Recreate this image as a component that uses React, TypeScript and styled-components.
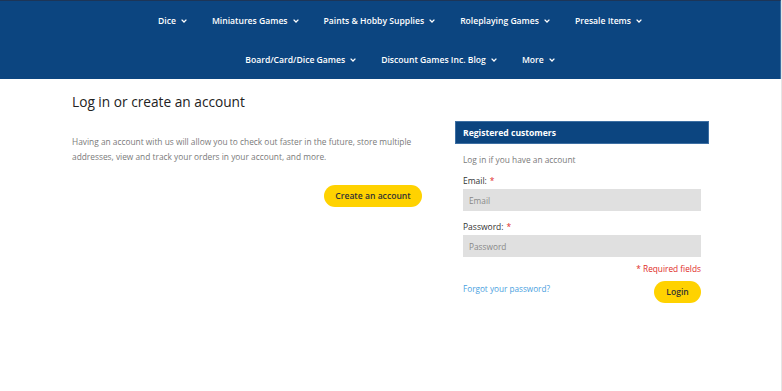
import React from "react";
import styled, { createGlobalStyle } from "styled-components";

const Global = createGlobalStyle`
  html, body { margin: 0; padding: 0; background: #fff; }
  body { font-family: "Open Sans", "Liberation Sans", sans-serif; }
  * { box-sizing: border-box; }
`;

const Page = styled.div`
  width: 782px;
  min-height: 391px;
  border-right: 1px solid #e6e6e6;
`;

const Header = styled.header`
  height: 79px;
  background: #0c4580;
  border-top: 1px solid #1d3557;
  border-right: 1px solid #3d6fa3;
  padding-left: 20px;
  display: flex;
  flex-direction: column;
`;

const NavRow = styled.ul`
  list-style: none;
  margin: 0;
  padding: 0;
  height: 39px;
  display: flex;
  justify-content: center;
  align-items: center;
  gap: 25px;
`;

const NavItem = styled.li`
  color: #fff;
  font-size: 8.6px;
  font-weight: 600;
  display: flex;
  align-items: center;
  gap: 5px;
  white-space: nowrap;
`;

const Chevron = () => (
  <svg width="6" height="4" viewBox="0 0 6 4">
    <path d="M0.6 0.6 L3 3 L5.4 0.6" fill="none" stroke="#fff" strokeWidth="1.3" />
  </svg>
);

const Main = styled.main`
  width: 637px;
  margin-left: 72px;
  padding-top: 13px;
`;

const Title = styled.h1`
  margin: 0;
  font-size: 13.7px;
  font-weight: 500;
  color: #222;
  line-height: 20px;
`;

const Columns = styled.div`
  display: flex;
  justify-content: space-between;
  align-items: flex-start;
`;

const LeftCol = styled.section`
  width: 350px;
  padding-top: 22px;
  display: flex;
  flex-direction: column;
`;

const Text = styled.p`
  margin: 0;
  font-size: 8.35px;
  line-height: 15px;
  color: #7a7a7a;
`;

const Pill = styled.button<{ $w: number }>`
  height: 22px;
  width: ${(p) => p.$w}px;
  border: none;
  border-radius: 11px;
  background: #ffd200;
  color: #333;
  font-family: "Open Sans", "Liberation Sans", sans-serif;
  font-size: 8.6px;
  font-weight: 600;
  padding: 0;
  cursor: pointer;
`;

const RightAlign = styled.div<{ $mt: number }>`
  display: flex;
  justify-content: flex-end;
  margin-top: ${(p) => p.$mt}px;
`;

const RightCol = styled.section`
  width: 254px;
  margin-top: 9px;
`;

const BlockTitle = styled.div`
  height: 23px;
  background: #0c4580;
  border: 1px solid #3d6fa3;
  color: #fff;
  font-size: 8.6px;
  font-weight: 700;
  display: flex;
  align-items: center;
  padding-left: 7px;
`;

const Form = styled.form`
  padding: 8px 8px 0;
  display: flex;
  flex-direction: column;
`;

const Label = styled.label<{ $mt: number }>`
  margin-top: ${(p) => p.$mt}px;
  font-size: 8.5px;
  color: #333;
  line-height: 14px;
  margin-bottom: 1px;
`;

const Star = styled.span`
  color: #e02b27;
  margin-left: 3px;
`;

const Input = styled.input`
  height: 22px;
  width: 100%;
  border: none;
  background: #e0e0e0;
  padding: 0 6px;
  font-family: "Open Sans", "Liberation Sans", sans-serif;
  font-size: 8.3px;
  color: #333;
  outline: none;
  &::placeholder { color: #888; }
`;

const Required = styled.div`
  margin-top: 6px;
  text-align: right;
  font-size: 8.3px;
  color: #e02b27;
  line-height: 12px;
`;

const Actions = styled.div`
  margin-top: 6px;
  display: flex;
  justify-content: space-between;
  align-items: flex-start;
`;

const Forgot = styled.a`
  margin-top: 2px;
  font-size: 8.2px;
  color: #4a9fe0;
  text-decoration: none;
  line-height: 12px;
`;

const nav1 = ["Dice", "Miniatures Games", "Paints & Hobby Supplies", "Roleplaying Games", "Presale Items"];
const nav2 = ["Board/Card/Dice Games", "Discount Games Inc. Blog", "More"];

export default function App() {
  return (
    <Page>
      <Global />
      <Header>
        <NavRow>
          {nav1.map((n) => (
            <NavItem key={n}>
              {n} <Chevron />
            </NavItem>
          ))}
        </NavRow>
        <NavRow>
          {nav2.map((n) => (
            <NavItem key={n}>
              {n} <Chevron />
            </NavItem>
          ))}
        </NavRow>
      </Header>
      <Main>
        <Title>Log in or create an account</Title>
        <Columns>
          <LeftCol>
            <Text>
              Having an account with us will allow you to check out faster in the future, store multiple
              addresses, view and track your orders in your account, and more.
            </Text>
            <RightAlign $mt={21}>
              <Pill $w={98}>Create an account</Pill>
            </RightAlign>
          </LeftCol>
          <RightCol>
            <BlockTitle>Registered customers</BlockTitle>
            <Form onSubmit={(e) => e.preventDefault()}>
              <Text>Log in if you have an account</Text>
              <Label $mt={7}>
                Email:<Star>*</Star>
              </Label>
              <Input placeholder="Email" />
              <Label $mt={9}>
                Password:<Star>*</Star>
              </Label>
              <Input placeholder="Password" type="password" />
              <Required>* Required fields</Required>
              <Actions>
                <Forgot href="#">Forgot your password?</Forgot>
                <Pill $w={47}>Login</Pill>
              </Actions>
            </Form>
          </RightCol>
        </Columns>
      </Main>
    </Page>
  );
}
